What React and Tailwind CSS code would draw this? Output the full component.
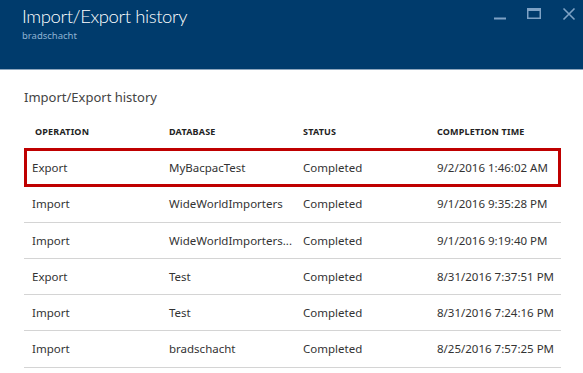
import React from "react";

const rows = [
  ["Export", "MyBacpacTest", "Completed", "9/2/2016 1:46:02 AM"],
  ["Import", "WideWorldImporters", "Completed", "9/1/2016 9:35:28 PM"],
  ["Import", "WideWorldImporters...", "Completed", "9/1/2016 9:19:40 PM"],
  ["Export", "Test", "Completed", "8/31/2016 7:37:51 PM"],
  ["Import", "Test", "Completed", "8/31/2016 7:24:16 PM"],
  ["Import", "bradschacht", "Completed", "8/25/2016 7:57:25 PM"],
];

export default function App() {
  return (
    <div
      className="w-[583px] h-[373px] overflow-hidden bg-white"
      style={{ fontFamily: '"Segoe UI", "Noto Sans", "Open Sans", sans-serif' }}
    >
      <div className="h-[70px] bg-[#003b6c] border-b border-[#8ea6bd] flex justify-between">
        <div className="pl-[22px] pt-[3px]">
          <div
            className="text-[18.5px] font-light leading-[26px] tracking-[-0.4px] text-white"
            style={{ fontFamily: 'Lato, "Noto Sans", sans-serif' }}
          >
            Import/Export history
          </div>
          <div className="text-[9.5px] leading-[12px] text-[#8fb3d3] mt-[1px]">bradschacht</div>
        </div>
        <div className="flex items-start pt-[5px] pr-[7px] gap-[19px] text-[#7ea2c5]">
          <svg width="14" height="14" viewBox="0 0 14 14" className="mt-[2px]">
            <rect x="1" y="10.5" width="12" height="2" fill="currentColor" />
          </svg>
          <svg width="16" height="14" viewBox="0 0 16 14" className="mt-[2px]">
            <rect x="1.75" y="1.75" width="12.5" height="9.5" fill="none" stroke="currentColor" strokeWidth="1.5" />
            <rect x="1" y="1" width="14" height="3" fill="currentColor" />
          </svg>
          <svg width="14" height="14" viewBox="0 0 14 14" className="mt-[2px] ml-[1px]">
            <path d="M1.5 1.5 L12.5 12.5 M12.5 1.5 L1.5 12.5" stroke="currentColor" strokeWidth="1.6" />
          </svg>
        </div>
      </div>

      <div className="px-[24px]">
        <div className="pt-[18px] text-[13px] leading-[18px] text-[#444]">Import/Export history</div>
        <div className="relative mt-[19px] w-[537px]">
          <div className="flex h-[25px] text-[9px] font-bold tracking-[0.2px] text-[#222] uppercase">
            <div className="w-[145px] pl-[11px]">Operation</div>
            <div className="w-[134px]">Database</div>
            <div className="w-[134px]">Status</div>
            <div>Completion time</div>
          </div>
          {rows.map((r, i) => (
            <div
              key={i}
              className="relative flex items-center h-[36.25px] border-b border-[#d4d4d4] text-[11.5px] text-[#333] box-border"
            >
              <div className="w-[145px] pl-[8px]">{r[0]}</div>
              <div className="w-[134px]">{r[1]}</div>
              <div className="w-[134px]">{r[2]}</div>
              <div>{r[3]}</div>
              {i === 0 && (
                <div className="absolute left-0 right-0 top-[-2px] bottom-[-2px] border-[3.5px] border-[#bf0000]" />
              )}
            </div>
          ))}
        </div>
      </div>
    </div>
  );
}
